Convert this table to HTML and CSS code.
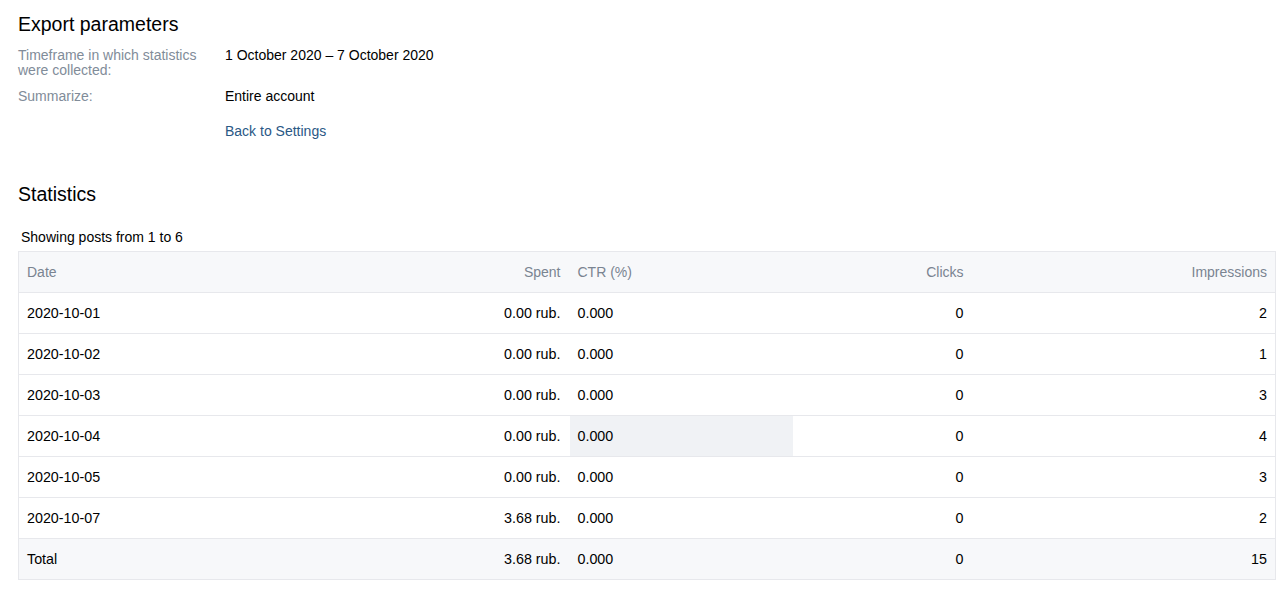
FILE: index.html
```html
<!DOCTYPE html>
<html>
<head>
<meta charset="utf-8">
<link rel="stylesheet" href="styles.css">
</head>
<body>
<div class="page">
  <h2 class="title">Export parameters</h2>
  <div class="params">
    <div class="label">Timeframe in which statistics were collected:</div>
    <div class="value">1 October 2020 – 7 October 2020</div>
    <div class="label">Summarize:</div>
    <div class="value">Entire account</div>
    <div></div>
    <div class="value"><a class="link" href="#">Back to Settings</a></div>
  </div>

  <h2 class="title stats-title">Statistics</h2>
  <div class="summary">Showing posts from 1 to 6</div>
  <table class="stats">
    <colgroup>
      <col class="c-date"><col class="c-spent"><col class="c-ctr"><col class="c-clicks"><col class="c-imp">
    </colgroup>
    <thead>
      <tr><th class="l">Date</th><th class="r">Spent</th><th class="l">CTR (%)</th><th class="r">Clicks</th><th class="r">Impressions</th></tr>
    </thead>
    <tbody>
      <tr><td class="l">2020-10-01</td><td class="r">0.00 rub.</td><td class="l">0.000</td><td class="r">0</td><td class="r">2</td></tr>
      <tr><td class="l">2020-10-02</td><td class="r">0.00 rub.</td><td class="l">0.000</td><td class="r">0</td><td class="r">1</td></tr>
      <tr><td class="l">2020-10-03</td><td class="r">0.00 rub.</td><td class="l">0.000</td><td class="r">0</td><td class="r">3</td></tr>
      <tr><td class="l">2020-10-04</td><td class="r">0.00 rub.</td><td class="l hover">0.000</td><td class="r">0</td><td class="r">4</td></tr>
      <tr><td class="l">2020-10-05</td><td class="r">0.00 rub.</td><td class="l">0.000</td><td class="r">0</td><td class="r">3</td></tr>
      <tr><td class="l">2020-10-07</td><td class="r">3.68 rub.</td><td class="l">0.000</td><td class="r">0</td><td class="r">2</td></tr>
      <tr class="total"><td class="l">Total</td><td class="r">3.68 rub.</td><td class="l">0.000</td><td class="r">0</td><td class="r">15</td></tr>
    </tbody>
  </table>
</div>
</body>
</html>
```

FILE: styles.css
```css
* { box-sizing: border-box; }
html, body { margin: 0; padding: 0; background: #fff; }
body {
  font-family: "Liberation Sans", Arial, sans-serif;
  color: #000;
  font-size: 14px;
}
.page {
  padding: 12px 5px 0 18px;
}
.title {
  margin: 0;
  font-size: 19.5px;
  font-weight: normal;
  line-height: 24px;
  color: #000;
}
.params {
  display: grid;
  grid-template-columns: 207px 1fr;
  row-gap: 11px;
  margin-top: 12px;
  font-size: 14px;
  line-height: 15px;
}
.label { color: #818c99; width: 190px; }
.value { color: #000; }
.link { color: #2a5885; text-decoration: none; }
.params .value:last-child { margin-top: 9px; }
.stats-title { margin-top: 43px; }
.summary {
  margin: 23px 0 0 3px;
  font-size: 14px;
  line-height: 16px;
}
.stats {
  margin-top: 6px;
  width: 1257px;
  border-collapse: collapse;
  table-layout: fixed;
  border: 1px solid #e7e8ec;
  font-size: 14.3px;
}
.c-date { width: 332px; }
.c-spent { width: 219px; }
.c-ctr { width: 223px; }
.c-clicks { width: 180px; }
.c-imp { width: 303px; }
.stats th, .stats td {
  height: 41px;
  padding: 0 9px 0 8px;
  border-bottom: 1px solid #e7e8ec;
  font-weight: normal;
  white-space: nowrap;
}
.stats td:last-child, .stats th:last-child { padding-right: 8px; }
.stats th { color: #7a8491; background: #f7f8fa; font-size: 14px; }
.stats .l { text-align: left; }
.stats .r { text-align: right; }
.stats td.hover { background: #f0f2f5; }
.stats .total td { background: #f7f8fa; }
```
